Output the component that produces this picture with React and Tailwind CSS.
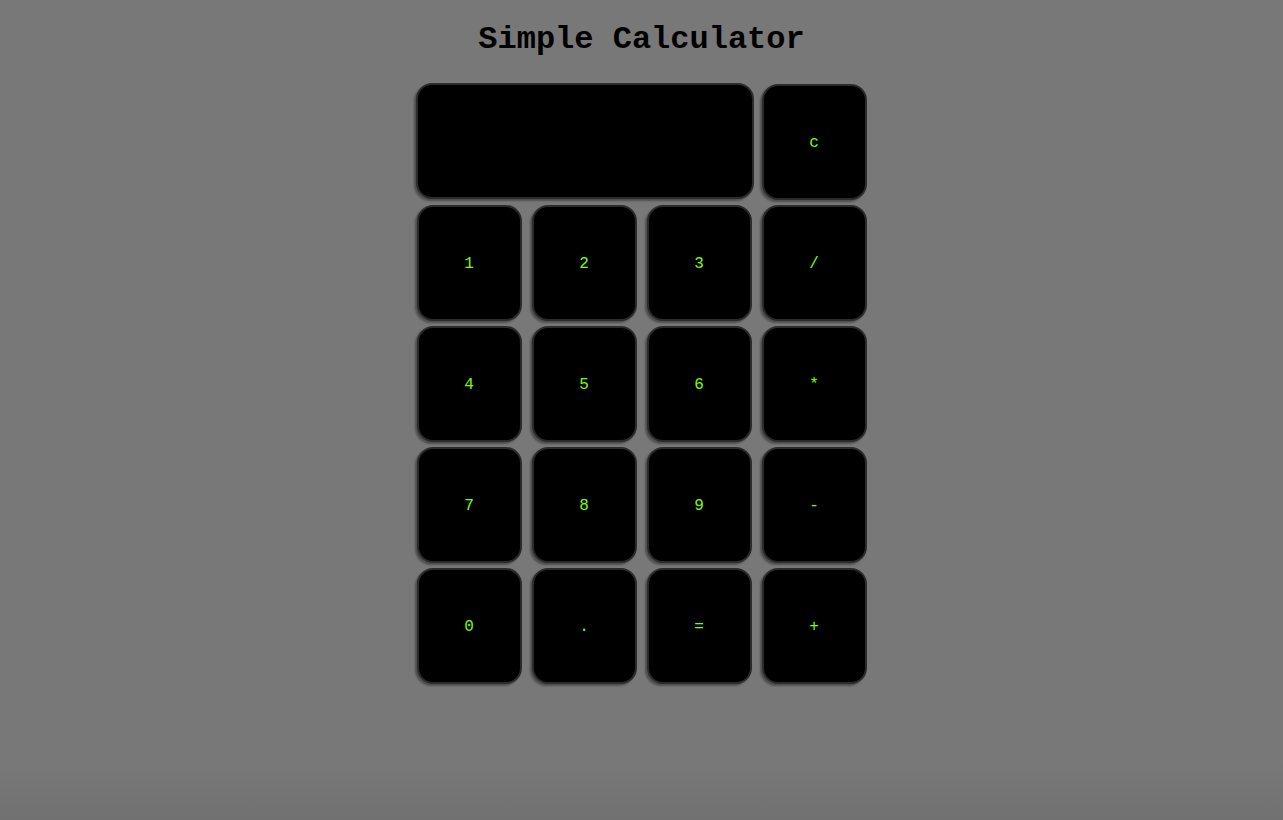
const keys = ['1', '2', '3', '/', '4', '5', '6', '*', '7', '8', '9', '-', '0', '.', '=', '+'];

const Key = ({ label }) => (
  <button className="flex h-[116px] w-[105px] items-center justify-center rounded-[16px] border-2 border-[#2b2b2b] bg-black pt-px text-[16px] text-[#7cfc00] shadow-[-2px_2px_2px_rgba(0,0,0,0.35)] [font-family:'Liberation_Mono',monospace]">
    {label}
  </button>
);

export default function App() {
  return (
    <div className="min-h-screen w-full bg-[linear-gradient(to_bottom,#787878_93%,#717171)] pt-[24px]">
      <h1 className="text-center text-[32px] font-bold leading-[32px] text-black [font-family:'Liberation_Mono',monospace]">
        Simple Calculator
      </h1>
      <div className="mx-auto mt-[28px] grid w-[452px] grid-cols-[repeat(4,105px)] gap-x-[10px] gap-y-[5px] pl-px">
        <div className="col-span-3 -ml-px -mt-px h-[116px] w-[338px] rounded-[16px] border-2 border-[#2b2b2b] bg-black shadow-[-2px_2px_2px_rgba(0,0,0,0.35)]" />
        <Key label="c" />
        {keys.map((k) => (
          <Key key={k} label={k} />
        ))}
      </div>
    </div>
  );
}
